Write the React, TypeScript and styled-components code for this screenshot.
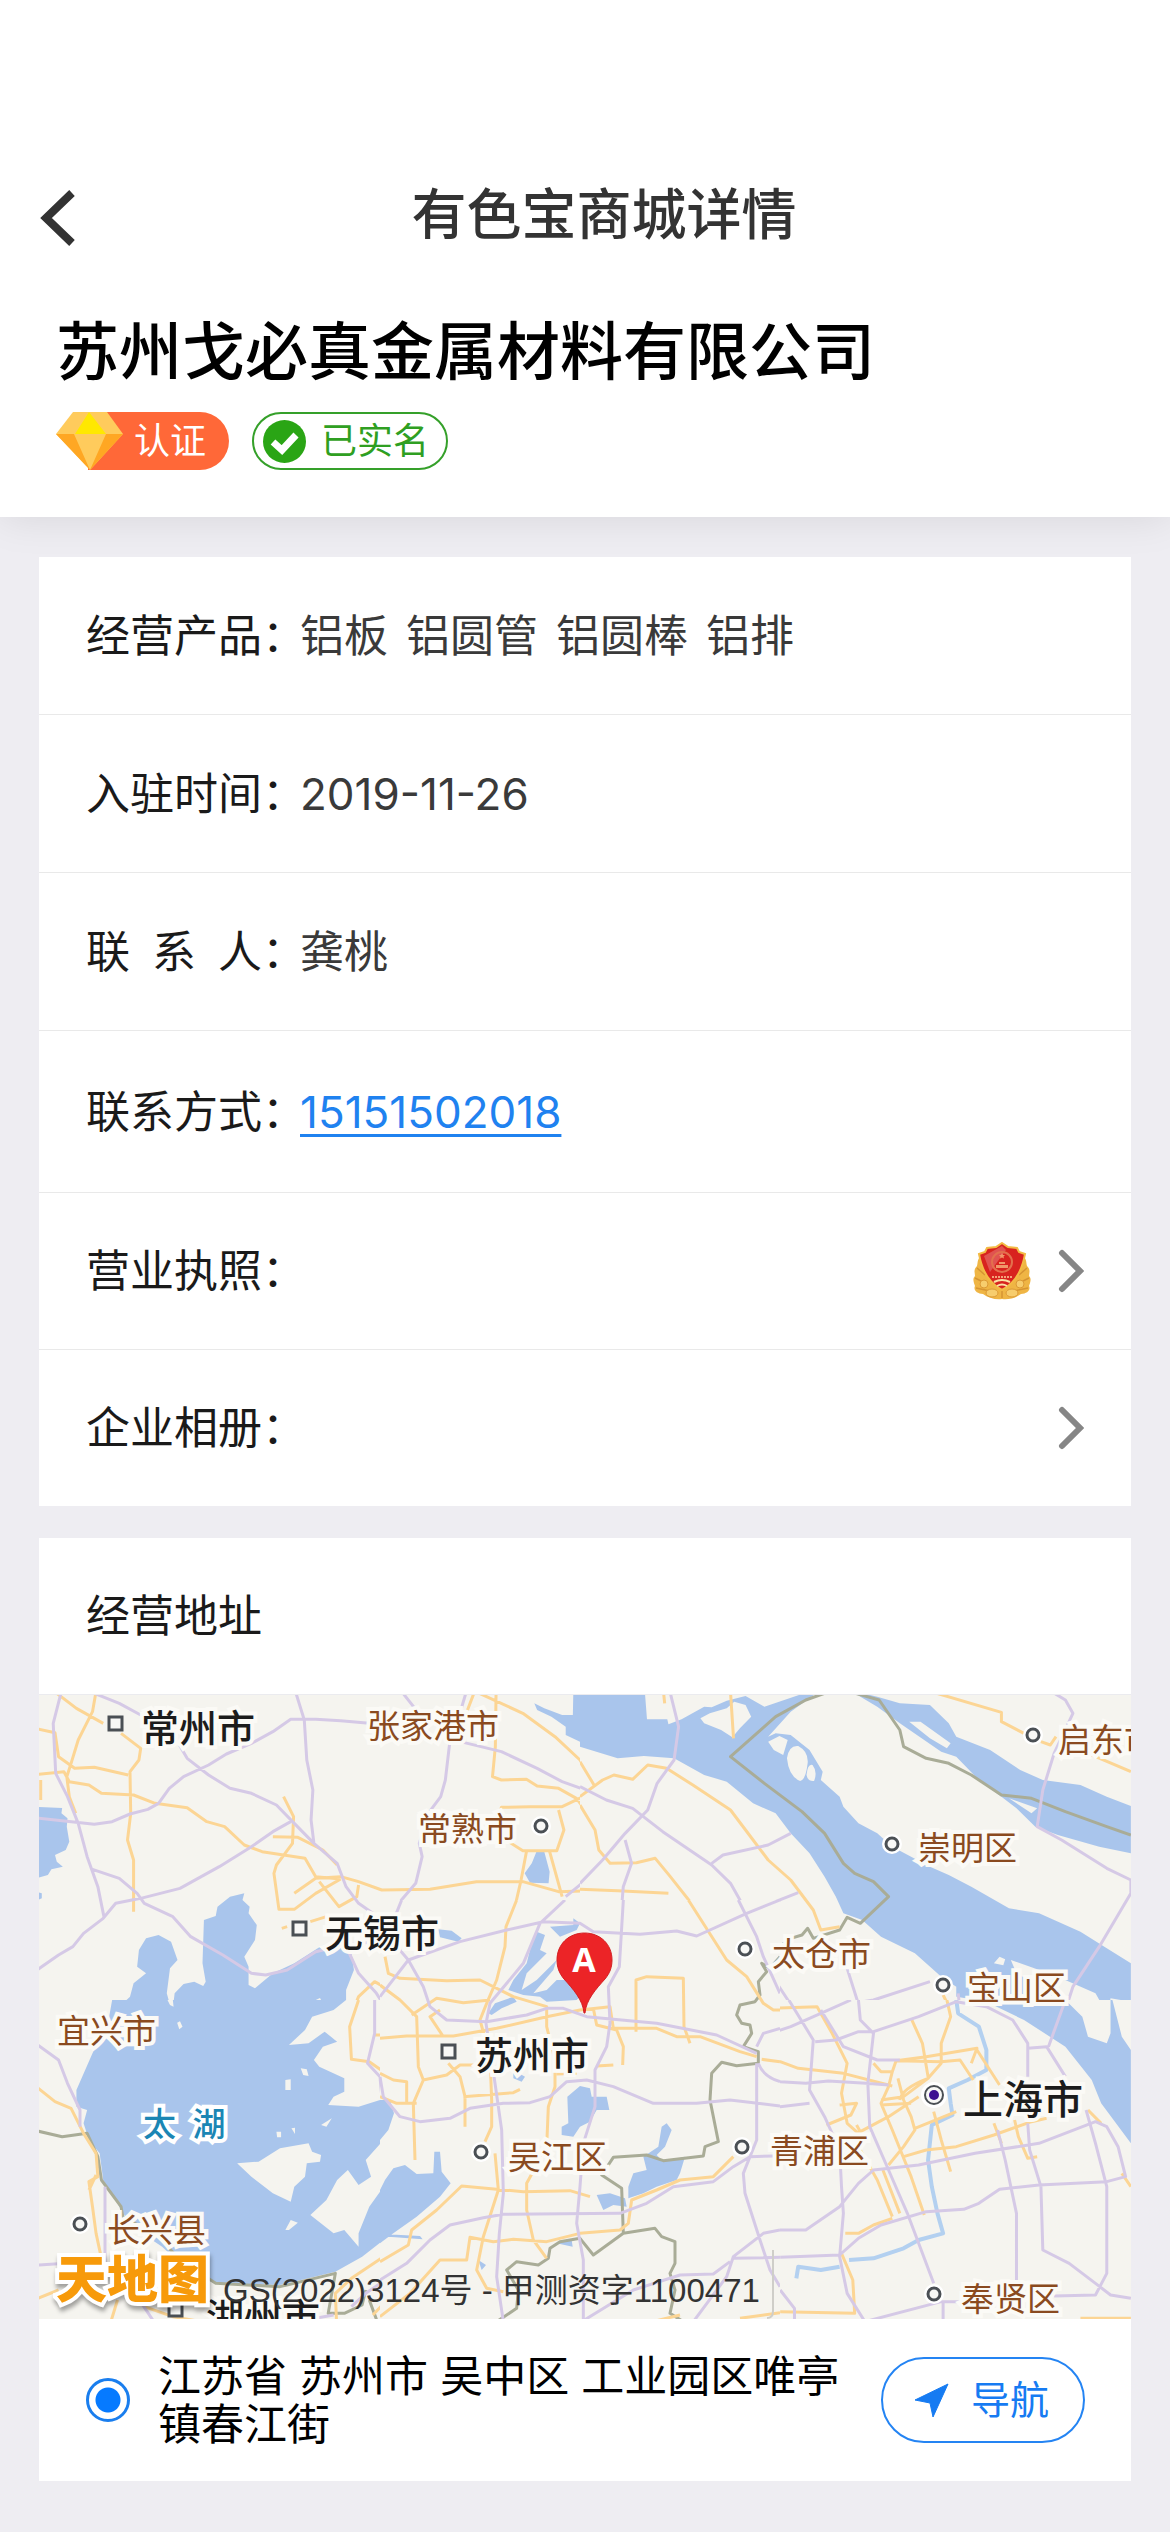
import React from "react";
import styled, { createGlobalStyle } from "styled-components";

const GlobalStyle = createGlobalStyle`
  *, *::before, *::after { box-sizing: border-box; }
  body {
    margin: 0;
    background: #eeedf2;
    color: #1a1a1a;
    font-family: Inter, "Noto Sans CJK SC", sans-serif;
  }
  h1, h2, p, dl, dt, dd, ul { margin: 0; padding: 0; }
  ul { list-style: none; }
  button { font: inherit; cursor: pointer; }
`;

const Top = styled.header`
  position: relative;
  background: #fff;
  padding-top: 148px;
  box-shadow: 0 0 40px rgba(0, 0, 0, 0.1);
`;

const NavBar = styled.div`
  display: flex;
  align-items: center;
  height: 132px;
  padding: 0 40px;
`;

const BackButton = styled.button`
  display: flex;
  width: 38px;
  padding: 0;
  border: 0;
  background: none;
`;

const NavTitle = styled.h1`
  flex: 1;
  text-align: center;
  font-size: 55px;
  line-height: 80px;
  font-weight: 500;
  color: #333;
`;

const Company = styled.div`
  padding: 26px 56px 47px;
`;

const CompanyName = styled.h2`
  font-size: 63px;
  line-height: 90px;
  font-weight: 500;
  color: #000;
`;

const Badges = styled.div`
  display: flex;
  gap: 23px;
  margin-top: 16px;
`;

const CertBadge = styled.span`
  display: flex;
  align-items: center;
  height: 58px;
  padding-right: 23px;
  border-radius: 0 29px 29px 0;
  background: linear-gradient(90deg, transparent 32px, #ff6838 32px);
  color: #fff;
  font-size: 36px;
  line-height: 56px;

  svg { margin-right: 10px; }
`;

const RealNameBadge = styled.span`
  display: flex;
  align-items: center;
  gap: 15px;
  height: 58px;
  padding: 0 17px 0 9px;
  border: 2px solid #35a02a;
  border-radius: 29px;
  color: #2f9f22;
  font-size: 36px;
  line-height: 54px;
`;

const Content = styled.main`
  display: grid;
  gap: 32px;
  padding: 40px 39px 50px;
`;

const Card = styled.section`
  background: #fff;
`;

const Row = styled.div<{ $height?: number }>`
  display: flex;
  align-items: center;
  min-height: ${(p) => p.$height ?? 157}px;
  padding: 0 47px;
  font-size: 44px;
  line-height: 60px;

  & + & { border-top: 1px solid #e9e9e9; }
`;

const Term = styled.dt`
  flex: none;
  width: 214px;
  white-space: nowrap;
  font-feature-settings: "halt";
`;

const Detail = styled.dd`
  flex: 1;
  display: flex;
  align-items: center;
  color: #3a3a3a;
`;

const Products = styled.ul`
  display: flex;
  flex-wrap: wrap;
  gap: 0 18px;
`;

const PhoneLink = styled.a`
  color: #1f82f0;
  text-decoration: underline;
  text-decoration-thickness: 3px;
  text-underline-offset: 6px;
`;

const MoreButton = styled.button`
  display: flex;
  align-items: center;
  gap: 26px;
  margin-left: auto;
  padding: 0;
  border: 0;
  background: none;
`;

const SectionTitle = styled.h2`
  height: 156px;
  padding: 0 47px;
  font-size: 44px;
  line-height: 156px;
  font-weight: 400;
`;

const MapBox = styled.div`
  position: relative;
  overflow: hidden;
  aspect-ratio: 1092 / 625;
  background: #f5f4ef;

  > svg { display: block; width: 100%; height: 100%; }
`;

type PlaceKind = "metro" | "city" | "district" | "lake";

const placeLook: Record<PlaceKind, { size: number; weight: number; color: string; halo: string }> = {
  metro: { size: 40, weight: 500, color: "#1c1c1c", halo: "#fbfaf6" },
  city: { size: 38, weight: 500, color: "#1c1c1c", halo: "#fbfaf6" },
  district: { size: 33, weight: 400, color: "#8a4a20", halo: "#fbfaf6" },
  lake: { size: 33, weight: 500, color: "#1b86b4", halo: "#fff" },
};

const Place = styled.span<{ $kind: PlaceKind; $x: number; $y: number }>`
  position: absolute;
  left: ${(p) => (p.$x / 1092) * 100}%;
  top: ${(p) => (p.$y / 625) * 100}%;
  transform: translateY(-50%);
  font-size: ${(p) => placeLook[p.$kind].size}px;
  line-height: 44px;
  font-weight: ${(p) => placeLook[p.$kind].weight};
  white-space: nowrap;
  color: ${(p) => placeLook[p.$kind].color};
  -webkit-text-stroke: 8px ${(p) => placeLook[p.$kind].halo};
  paint-order: stroke fill;
`;

const MapPin = styled.span`
  position: absolute;
  left: 47.3%;
  top: 38%;
  isolation: isolate;
  width: 57px;
  height: 82px;
  color: #fff;
  font: 700 34px/54px "Open Sans", sans-serif;
  text-align: center;

  svg { position: absolute; inset: 0; z-index: -1; }
`;

const Attribution = styled.div`
  position: absolute;
  left: 17px;
  bottom: 4px;
  display: flex;
  align-items: flex-end;
  gap: 14px;
`;

const MapLogo = styled.b`
  color: #f79a0a;
  font-size: 51px;
  line-height: 70px;
  font-weight: 900;
  -webkit-text-stroke: 8px #fff;
  paint-order: stroke fill;
  filter: drop-shadow(1px 4px 2px rgba(0, 0, 0, 0.35));
`;

const Licence = styled.small`
  color: #333;
  font-family: "Liberation Sans", "Noto Sans CJK SC", sans-serif;
  font-size: 33px;
  line-height: 48px;
`;

const AddressBar = styled.div`
  display: flex;
  align-items: center;
  min-height: 162px;
  padding: 0 46px 0 47px;
`;

const LocationRadio = styled.input`
  appearance: none;
  flex: none;
  width: 44px;
  height: 44px;
  margin: 0 28px 0 0;
  border: 3px solid #1a7eee;
  border-radius: 50%;
  background: radial-gradient(circle, #067aff 12px, #fff 13px);
`;

const Address = styled.label`
  flex: 1;
  margin-right: 40px;
  font-size: 43px;
  line-height: 48px;
  color: #000;
`;

const NavigateButton = styled.button`
  flex: none;
  display: flex;
  align-items: center;
  gap: 22px;
  height: 86px;
  padding: 0 34px 0 31px;
  border: 2px solid #2484f3;
  border-radius: 43px;
  background: #fff;
  color: #167bf2;
  font-size: 39px;
  line-height: 56px;
`;

const Chevron = () => (
  <svg width="26" height="44" viewBox="0 0 26 44" fill="none" stroke="#868686" strokeWidth="6" strokeLinecap="round">
    <path d="M4 4 22 22 4 40" />
  </svg>
);

const Diamond = () => (
  <svg width="68" height="58" viewBox="0 0 68 58">
    <path d="M17 0H51L67 22 34 58 0 22Z" fill="#ffcb5c" />
    <path d="M0 22H18L34 58ZM67 22H50L34 58Z" fill="#ffa723" />
    <path d="M33 0 50 22H19Z" fill="#ffe800" />
  </svg>
);

const Emblem = () => (
  <svg width="60" height="58" viewBox="0 0 60 58">
    <path
      d="M9 14C5 17 6 21 5 24 1 28 3 31 3 34 0 37 2 41 3 44 1 48 5 52 11 52 16 56 24 58 30 57 36 58 44 56 49 52 55 52 59 48 57 44 58 41 60 37 57 34 57 31 59 28 55 24 54 21 55 17 51 14Z"
      fill="#efb544"
    />
    <path
      d="M5 26 13 33M3 36 15 42M4 46 18 49M55 26 47 33M57 36 45 42M56 46 42 49M30 56V48"
      stroke="#d69432"
      strokeWidth="1.5"
      fill="none"
    />
    <g fill="#f7cd6d" stroke="#dc9a35" strokeWidth="1">
      <ellipse cx="20" cy="51" rx="6" ry="4" />
      <ellipse cx="40" cy="51" rx="6" ry="4" />
      <ellipse cx="12" cy="42" rx="4" ry="4" />
      <ellipse cx="48" cy="42" rx="4" ry="4" />
    </g>
    <path
      d="M30 1 36 5 45 6 47 10 53 12C50 30 43 41 30 48 17 41 10 30 7 12L13 10 15 6 24 5Z"
      fill="#d8231f"
      stroke="#f3bb45"
      strokeWidth="2"
    />
    <path d="M12 14 30 4 34 8 18 30Z" fill="#fff" opacity=".22" />
    <circle cx="30" cy="20" r="10" fill="none" stroke="#e3704d" strokeWidth="2" />
    <path d="m30 11 1 2h2l-1.500 1.500.5 2-2-1-2 1 .5-2L27 13h2zM24 23h12v3H24zM27 20h6v2h-6z" fill="#f0976a" />
    <path d="M20 35H40" stroke="#f3a27a" strokeWidth="2" strokeDasharray="2 1" />
    <path d="M22 40Q30 36 38 40M25 44Q30 41 35 44" stroke="#fbe3a4" strokeWidth="2" fill="none" />
  </svg>
);

interface TileData {
  x: number;
  y: number;
  w: number;
  h: number;
  box: string;
  bw: number;
  bh: number;
  water: string;
  land?: string;
  river?: string;
  border: string;
  motorway: string;
  road: string;
}

const tiles: TileData[] = [
  {
    x: -9, y: -14, w: 560, h: 330, box: "0 0 1568 990", bw: 1568, bh: 990,
    water:
      "M0 380L90 384 88 400 105 415 103 440 110 485 100 510 70 525 75 545 92 560 60 568 50 585 0 600ZM0 630L33 640 33 655 0 670ZM240 990L280 950 290 910 325 880 300 860 305 810 325 775 360 765 395 785 413 840 392 865 383 940 392 975 400 985 405 940 430 912 460 905 485 918 492 905 483 850 487 720 520 708 525 680 560 650 600 640 595 660 615 680 612 700 635 735 630 780 600 830 612 860 612 915 630 925 680 880 740 850 820 795 870 790 900 820 907 870 885 930 885 990ZM1412 70L1440 85 1490 105 1520 105 1522 0H1568V210L1540 185 1500 165 1500 140 1460 110 1420 90ZM1418 515H1440L1455 575 1452 610 1400 608 1385 580 1405 550Z",
    land: "M778 972l10 -12 6 6 -12 12zM800 960l12 -6 4 8 -12 6z",
    border: "",
    motorway:
      "M88 34L65 130 72 280 105 350 135 430 160 530 190 620 207 710M175 38L250 70 310 105M410 180L440 235 500 285 560 325 620 340 690 375 740 430 795 490 860 550 885 620 920 670 960 700 990 730M0 412L90 422 180 433 230 425 280 402 330 388 360 370 390 325 430 290 500 255 550 222 620 190 680 155 730 118 800 118 870 122 950 130M742 30L768 120 775 240 792 330 787 420 795 490M1040 34L1085 95M1222 34L1205 95M1175 190L1163 300 1150 350 1115 400 1090 490 1098 530 1080 610 1040 660 1020 695M1205 185L1320 215 1420 265 1490 305 1568 335M0 885L80 825 120 800 150 760 205 715 240 670 310 655 420 625 530 560 620 500 680 455 730 425M175 568L250 595 300 640 320 670 400 710 450 770 540 825 620 880 660 885 720 870 800 815 880 795 1000 780M890 810L920 880 970 940 1000 990M1568 590L1500 650",
    road:
      "M70 36L130 85 205 130M185 34L175 95 135 180 115 250 103 290 110 350 128 400M0 142L70 158 80 230 125 265 180 262 275 285M255 160L310 205 305 240 280 275 282 400 273 480 290 540 290 695M0 286L95 275 110 305 165 315 200 340 290 345 350 370 440 383 495 425 545 440 600 495 650 515 710 525 770 535 800 590 870 597M30 300V360M710 350L738 410 735 490 690 555 683 580 697 688 740 688 800 640 870 597M680 470L750 472 820 510 860 555M740 640L800 595 870 590 920 605 985 630 1120 628 1250 605 1380 605 1480 635 1568 632M810 605L865 680 915 650 920 615M785 725L830 710M705 745L720 740M1245 34L1225 90M1250 36L1380 100 1470 170 1540 240 1568 290M1305 34L1303 200 1295 290 1320 300 1390 298 1420 318 1480 325 1530 355 1568 410M1568 340L1490 380 1400 380 1320 382 1310 410M1340 485L1380 512H1475L1495 450 1480 390M1390 515L1375 600 1360 670M1455 515L1490 650M905 990L920 950 965 905 990 920",
  },
  {
    x: 541, y: -14, w: 590, h: 330, box: "0 0 1568 990", bw: 1568, bh: 990,
    water:
      "M0 30H640L560 95 500 170 520 160 560 165 610 210 645 275 640 300 690 350 700 380 740 430 790 460 830 500 880 530 930 560 980 585 1040 620 1140 685 1220 700 1330 755 1400 805 1464 850V990H1100L1000 950 1000 920 960 890 940 870 890 820 800 770 750 720 700 700 680 650 650 590 610 520 560 460 520 400 460 370 390 305 330 285 250 235 170 228 100 235 0 200ZM715 30L790 50 850 70 930 75 980 130 1000 170 1090 210 1170 270 1230 300 1330 315 1400 350 1464 378V520L1380 500 1270 465 1210 440 1160 385 1120 350 1060 300 1000 230 960 215 850 130 790 80Z",
    land:
      "M172 30L178 118H232L235 133 270 118 330 80 350 82 390 62 440 48 490 80 580 46 620 30ZM320 115L345 100 390 85 410 65 440 75 455 110 425 145 405 172 375 150 330 130ZM500 185L530 168 552 180 540 225 515 210ZM550 235Q555 195 580 198 608 215 605 250 600 300 585 303 555 290 550 235ZM602 285Q605 250 618 255 632 275 622 303 605 305 602 285ZM875 125L905 125 985 190 975 205 930 175ZM1140 355L1215 385 1200 400ZM1145 840L1200 862 1270 890 1370 940 1395 990H1300L1240 930 1160 880ZM1410 955L1464 965V990H1405ZM1100 850L1115 830 1130 838 1125 856ZM1000 990L1000 950 1085 965 1120 990Z",
    border:
      "M660 36L600 60 520 110 400 230 490 310 590 395 650 460 700 550 730 580 780 605 820 650 745 730 710 712 690 750 620 775 605 745 590 765 560 775 530 800M725 38L795 60 850 150 860 200 920 235 980 250 1040 285 1120 345 1200 355 1290 395 1400 440 1464 465",
    motorway:
      "M238 30L262 140 250 240 205 310 180 390 120 460 60 540 0 610M0 320L70 360 140 385 220 455 350 555 400 610 440 690 480 780 500 870 570 990M350 550L380 525 500 495 560 460M120 480L137 550 115 620 105 760M440 700L580 638M532 660L440 700 310 770M1255 36L1290 60 1310 100 1260 220 1230 330 1215 440 1280 480 1400 565 1464 600V640L1380 800 1310 920 1290 990M700 830L745 990M620 990L780 960 930 905M1005 940L1010 990",
    road:
      "M0 350L60 300 90 285 140 298 180 255 230 265 300 315 400 390 440 450 500 540 560 600 620 690 640 750 690 740M0 245L40 320M0 375L40 450 50 510 80 550 150 548 200 535 240 590 310 690M0 628L100 632 235 640M400 36L408 175M222 36L225 70M930 34L1120 97 1120 125 1180 160M1225 185L1250 195 1265 170M1350 220L1464 275M505 985L600 975 640 990M965 945L985 990",
  },
  {
    x: -9, y: 306, w: 560, h: 340, box: "0 0 1568 1020", bw: 1568, bh: 1020,
    water:
      "M230 0H385L392 15 402 20 400 0H885L850 30 790 50 770 90 725 135 780 130 825 95 860 125 820 140 795 180 810 200 880 235 880 275 850 290 835 315 920 320 980 300 1020 320 1020 360 990 420 940 480 955 530 920 555 890 510 860 540 830 600 785 645 850 700 880 690 920 740 920 700 950 620 990 560 1010 510 1180 545 1060 670 990 720 930 770 855 815 700 855 515 850 420 790 370 740 300 690 260 640 235 590 205 540 195 460 165 420 150 370 160 330 130 320 130 270 175 160 220 60Z",
    land:
      "M412 68L420 64 427 80 418 88ZM758 205L775 208 780 228 765 225ZM715 240L730 238V270H715ZM815 375L845 355 830 380ZM690 395H703V412H692ZM732 385L742 383V402ZM580 490L640 485 700 445 780 430 790 455 815 465 812 485 775 490 770 530 740 560 730 605 680 580 620 530ZM715 690L730 660 750 668 725 690Z",
    border:
      "M0 388L90 410 160 400 190 470 200 540 255 620 260 650 360 710 420 780 520 850 700 860 855 820 835 940 880 940 930 915 940 870M950 900L970 958",
    motorway:
      "M0 118L80 180 105 250 140 330 140 380M210 560V790M0 797L100 790 200 805 300 890 350 970M965 0V100L945 190 980 230 985 290M995 840L940 880 900 920M720 970L850 945",
    road:
      "M0 245L70 305 115 325 150 400 185 460 190 530 165 545 175 620 185 700 205 800M185 525L165 570M0 905L80 870M990 215L950 185 900 178 895 80 920 0M965 105H1000M990 770L900 835 855 880 858 958M995 905L960 945M225 970L245 900M320 920L400 950 480 965",
  },
  {
    x: 541, y: 306, w: 590, h: 340, box: "0 0 1568 1020", bw: 1568, bh: 1020,
    water:
      "M1070 0L1180 60 1290 140 1360 240 1385 310 1464 430V150L1440 110 1415 0H1410V100L1400 130 1350 110 1335 50 1290 0Z",
    river:
      "M1000 0L1005 40 1060 80 1080 150 1080 210 1030 240 980 265 985 310 990 345 935 375 925 480 935 560 950 640 965 700 900 720 860 745 780 775 715 780M690 800L640 810 580 800 575 835",
    border: "",
    motorway:
      "M480 110L560 80 640 40 720 0M555 0L620 120 610 270 650 350 690 450 695 560 700 640 690 770 710 880 760 970M640 30L700 140 790 180H850M625 125L680 120 740 95 780 95 900 50 1000 5 1080 20 1150 60 1190 130V230M1190 370L1195 450 1225 560 1230 750 1300 790 1370 850 1410 885 1464 895M740 0L745 60 780 100 765 250 770 380 820 510 870 640 900 730 940 850M500 235L532 245 600 250 660 243 760 250 820 255M500 320L532 320 610 310M500 695L532 690 600 690 690 620 740 550 780 510 900 495 1050 460 1220 430 1370 365 1400 380 1430 440 1450 530 1400 545 1220 555 1115 568 1060 610 1020 628 920 635 800 675 740 715 690 765 532 772M1110 390L1130 480 1160 640V850M1345 330L1370 430 1400 560V820L1370 885 1260 888M1190 145L1240 140 1290 230M1245 140L1290 0M740 970L960 905H1010M965 905V970M532 870L570 925V970",
    road:
      "M500 180L532 185 580 205 700 220 830 258M490 0L510 25 630 20 670 100 710 190 695 280 710 370 740 400M880 55L910 130 925 230M975 0L985 50 960 130V190L925 235 860 290 800 300M840 182L920 170 1055 145 1040 190M1055 150L1115 255M780 190L800 215H830L840 182M830 215L820 260 800 310 830 390 880 530 915 645M840 182L960 185 1010 180 1045 240M845 235L860 300 880 350 890 390 860 440 820 495M800 315L880 310M655 375L720 345 735 310 690 315M735 375L745 395 820 350 900 290M890 385L1000 335M850 300Q855 265 925 235M860 470L920 450 1000 440 1100 405 1200 365 1240 355M1100 370L1120 430M1155 360L1165 410 1190 475 1215 470M940 335L960 420 985 515M1350 330L1385 370M1440 520L1464 560M740 440L790 540 830 650M805 510L850 640M830 655L780 675 740 700H705M695 760L725 840 730 940 532 935M1330 955H1464",
  },
  {
    x: 341, y: 206, w: 400, h: 440, box: "0 0 1200 1320", bw: 1200, bh: 1320,
    water:
      "M175 88L215 92 245 115 235 125 180 112ZM470 95L495 105 480 150 500 160 440 220 425 270 470 240 530 180 520 210 460 280 500 270 530 240 560 240 600 290 590 300 500 305 480 290 430 285 385 270 400 240 440 190 455 130ZM510 80L580 75V55L600 70 590 90 540 110ZM325 340L345 310 400 290 410 305 365 325 335 345ZM600 558L630 565 635 590H680L688 630H650L630 665 600 680 580 710 545 705V680L565 670 562 590ZM845 680L860 670 875 690 855 740 830 765 850 785 915 770 900 820 890 840 830 860 790 880 745 895V860L760 820 800 810 790 770 835 740ZM650 885L690 880 735 895 740 920 700 915 670 930ZM0 600L30 600 42 640 25 690 0 720ZM0 870L15 840 40 805 75 795 110 822 160 820 163 755H180L185 815 212 850 180 890 110 950 40 1000 0 1030ZM20 1003L120 1008 128 1018 25 1010ZM530 1030L575 1020 578 1040ZM295 1080L318 1095 305 1110ZM370 410L400 415V440ZM400 510L435 530 425 545 400 535Z",
    border:
      "M1200 170L1170 205 1145 190 1160 215 1135 245 1140 285 1125 305 1080 315 1070 345 1085 370 1110 375 1115 400 1090 440 1135 455V490L1070 497 1025 487 995 520 990 600 1015 725 975 740 970 768 850 782 800 765 700 772 665 825 725 865 730 1000 640 1065 600 1015 540 1025 510 1045 505 1075 475 1095 410 1085 380 1110 415 1170 410 1225 350 1265M730 1000L825 985 845 1010 885 1025V1090L870 1120 885 1170 870 1240 910 1265",
    motorway:
      "M65 0L45 50M0 290L85 180 240 125 380 90 490 65 600 70 640 95 780 103 890 93 950 108 1100 40 1200 0M0 80L85 180 130 260 150 320 200 360 320 365 440 345 500 325H550L620 350 700 358 830 370 1010 405 1130 460M555 0L480 70 430 190 330 310 318 370 345 550 365 690 370 880 358 1000 350 1130 370 1265M730 0L718 200 685 260 690 370 680 440 645 510V620L610 730 600 860 590 970 610 1080V1265M0 530L10 590 60 650 120 665 210 655 270 625 370 610 450 608 510 590 560 545 620 540 700 560 820 610 950 610 1050 600 1200 618M0 1140L80 1090 150 1020 210 975 310 953 370 943 720 940 800 910 880 860 1000 845 1060 800 1110 770 1180 768M1075 0L1130 110 1150 170 1200 280M1130 490V720L1090 820 1095 880 1140 1020 1170 1110 1200 1160M1200 990L1150 1000 1060 1070 1040 1130 940 1265M1060 1075L1200 1072M610 1262L760 1170 900 1125 1000 1122 1050 1085M1135 490Q1150 530 1200 545M1130 440L1150 400 1200 385",
    road:
      "M410 0L378 80 375 140 350 240 320 310 300 360 330 470 335 600V680L315 725M15 170L25 220 60 235 200 242 300 240 400 290 500 320V380L525 480V560L505 620 500 740 440 850V930L460 1020 500 1075M0 255L60 300 110 350 115 500 130 540 100 610 105 780M95 345L170 295 250 308 330 300M0 415L80 408H220L350 385 500 350 600 330 690 320 700 385M190 410L150 350 180 330M0 520L40 540 80 545V610M0 590L50 610H110M130 540L200 525 240 495H290M205 490L240 530 255 590V680M250 590L400 578 420 568M530 522L590 520M650 498L700 495M640 325L650 375 710 390 730 440 728 495M700 385H830L890 410 960 410 1080 455 1130 470M1145 478L1200 485M768 395V240L800 230 910 235 912 380 930 430M925 0L1040 180 1100 230 1150 310 1180 330H1200M0 1085L85 1035 95 990 170 930 245 858 350 868 430 875 570 872 630 890M0 1250L90 1180 180 1080 260 1080 270 1012 340 1025 400 1018 500 1025 600 1000 720 990 745 970 755 900 830 870 900 840 1000 830 1060 770M345 760L355 870 310 1010 290 1110 320 1165 370 1175M830 1262L900 1245M1080 1255L1200 1238",
  },
];

const MapTile = ({ t }: { t: TileData }) => {
  const line = { fill: "none", vectorEffect: "non-scaling-stroke" as const, strokeLinejoin: "round" as const };
  return (
    <svg x={t.x} y={t.y} width={t.w} height={t.h} viewBox={t.box} preserveAspectRatio="none" overflow="hidden">
      <rect width={t.bw} height={t.bh} fill="#f5f4ef" />
      <path d={t.water} fill="#a9c5ec" />
      {t.land && <path d={t.land} fill="#f5f4ef" />}
      {t.river && <path d={t.river} {...line} stroke="#b3d0f0" strokeWidth="4" />}
      <path d={t.border} {...line} stroke="#a9ac97" strokeWidth="3" />
      <path d={t.road} {...line} stroke="#fcd594" strokeWidth="3" />
      <path d={t.motorway} {...line} stroke="#d5c9e6" strokeWidth="3" />
    </svg>
  );
};

const places: { name: string; kind: PlaceKind; x: number; y: number }[] = [
  { name: "常州市", kind: "city", x: 102, y: 34 },
  { name: "张家港市", kind: "district", x: 328, y: 32 },
  { name: "常熟市", kind: "district", x: 379, y: 135 },
  { name: "无锡市", kind: "city", x: 286, y: 239 },
  { name: "启东市", kind: "district", x: 1019, y: 46 },
  { name: "崇明区", kind: "district", x: 879, y: 154 },
  { name: "太仓市", kind: "district", x: 733, y: 260 },
  { name: "宝山区", kind: "district", x: 928, y: 294 },
  { name: "宜兴市", kind: "district", x: 18, y: 337 },
  { name: "苏州市", kind: "city", x: 436, y: 361 },
  { name: "吴江区", kind: "district", x: 469, y: 463 },
  { name: "太\u2002湖", kind: "lake", x: 104, y: 430 },
  { name: "长兴县", kind: "district", x: 68, y: 536 },
  { name: "湖州市", kind: "city", x: 167, y: 623 },
  { name: "上海市", kind: "metro", x: 924, y: 406 },
  { name: "青浦区", kind: "district", x: 731, y: 457 },
  { name: "奉贤区", kind: "district", x: 922, y: 605 },
];

const cityMarks = [[76, 29], [260, 234], [409, 357], [136, 615]];
const districtMarks = [
  [502, 132], [994, 41], [853, 150], [706, 255], [904, 291], [442, 458], [41, 530], [703, 453], [895, 600],
];

const RegionMap = () => (
  <MapBox>
    <svg viewBox="0 0 1092 625" aria-hidden="true">
      {tiles.map((t, i) => (
        <MapTile key={i} t={t} />
      ))}
      <path d="M734 556V617q0 7-6 7" fill="none" stroke="#cfcec9" strokeWidth="2" />
      <g fill="#f5f4ef" stroke="#fff" strokeWidth="8">
        {districtMarks.map(([x, y]) => (
          <circle key={`${x}-${y}`} cx={x} cy={y} r="6" />
        ))}
        <circle cx="895" cy="401" r="9" />
      </g>
      <g fill="#f8f8f6" stroke="#4a4f54" strokeWidth="3">
        {cityMarks.map(([x, y]) => (
          <rect key={`${x}-${y}`} x={x - 6} y={y - 6} width="13" height="13" />
        ))}
        {districtMarks.map(([x, y]) => (
          <circle key={`${x}-${y}`} cx={x} cy={y} r="6" />
        ))}
        <circle cx="895" cy="401" r="9" strokeWidth="2" />
      </g>
      <circle cx="895" cy="401" r="5" fill="#3d1191" />
      <path d="M0 .5H1092" stroke="#ebebef" />
    </svg>
    {places.map((p) => (
      <Place key={p.name} $kind={p.kind} $x={p.x} $y={p.y}>
        {p.name}
      </Place>
    ))}
    <MapPin>
      <svg width="57" height="82" viewBox="0 0 57 82">
        <path
          d="M28 81C27 68 17 57 8 47 3 41 1 35 1 28 1 12 13 1 28.500 1S56 12 56 28C56 35 54 41 49 47 40 57 30 68 29 81Z"
          fill="#ec2427"
          stroke="#d41f22"
        />
      </svg>
      A
    </MapPin>
    <Attribution>
      <MapLogo>天地图</MapLogo>
      <Licence>GS(2022)3124号 - 甲测资字1100471</Licence>
    </Attribution>
  </MapBox>
);

export default function App() {
  return (
    <>
      <GlobalStyle />
      <Top>
        <NavBar>
          <BackButton type="button" aria-label="返回">
            <svg width="38" height="66" viewBox="0 0 38 66" fill="none" stroke="#333" strokeWidth="8">
              <path d="M32 12 6 37 32 62" />
            </svg>
          </BackButton>
          <NavTitle>有色宝商城详情</NavTitle>
        </NavBar>
        <Company>
          <CompanyName>苏州戈必真金属材料有限公司</CompanyName>
          <Badges>
            <CertBadge>
              <Diamond />
              认证
            </CertBadge>
            <RealNameBadge>
              <svg width="43" height="43" viewBox="0 0 43 43">
                <circle cx="21.500" cy="21.500" r="21.500" fill="#2aa515" />
                <path d="M10 22 19 30 33 15" fill="none" stroke="#fff" strokeWidth="7" />
              </svg>
              已实名
            </RealNameBadge>
          </Badges>
        </Company>
      </Top>
      <Content>
        <Card as="dl">
          <Row>
            <Term>经营产品：</Term>
            <Detail>
              <Products>
                <li>铝板</li>
                <li>铝圆管</li>
                <li>铝圆棒</li>
                <li>铝排</li>
              </Products>
            </Detail>
          </Row>
          <Row $height={158}>
            <Term>入驻时间：</Term>
            <Detail>2019-11-26</Detail>
          </Row>
          <Row $height={158}>
            <Term>联&ensp;系&ensp;人：</Term>
            <Detail>龚桃</Detail>
          </Row>
          <Row $height={162}>
            <Term>联系方式：</Term>
            <Detail>
              <PhoneLink href="tel:15151502018">15151502018</PhoneLink>
            </Detail>
          </Row>
          <Row>
            <Term>营业执照：</Term>
            <Detail>
              <MoreButton type="button" aria-label="营业执照">
                <Emblem />
                <Chevron />
              </MoreButton>
            </Detail>
          </Row>
          <Row>
            <Term>企业相册：</Term>
            <Detail>
              <MoreButton type="button" aria-label="企业相册">
                <Chevron />
              </MoreButton>
            </Detail>
          </Row>
        </Card>
        <Card>
          <SectionTitle>经营地址</SectionTitle>
          <RegionMap />
          <AddressBar>
            <LocationRadio type="radio" id="address" name="address" defaultChecked />
            <Address htmlFor="address">江苏省 苏州市 吴中区 工业园区唯亭镇春江街</Address>
            <NavigateButton type="button">
              <svg width="35" height="35" viewBox="0 0 35 35">
                <path d="M34 1 19 34 16 20 1 17Z" fill="#167bf2" stroke="#167bf2" strokeWidth="1" strokeLinejoin="round" />
              </svg>
              导航
            </NavigateButton>
          </AddressBar>
        </Card>
      </Content>
    </>
  );
}
